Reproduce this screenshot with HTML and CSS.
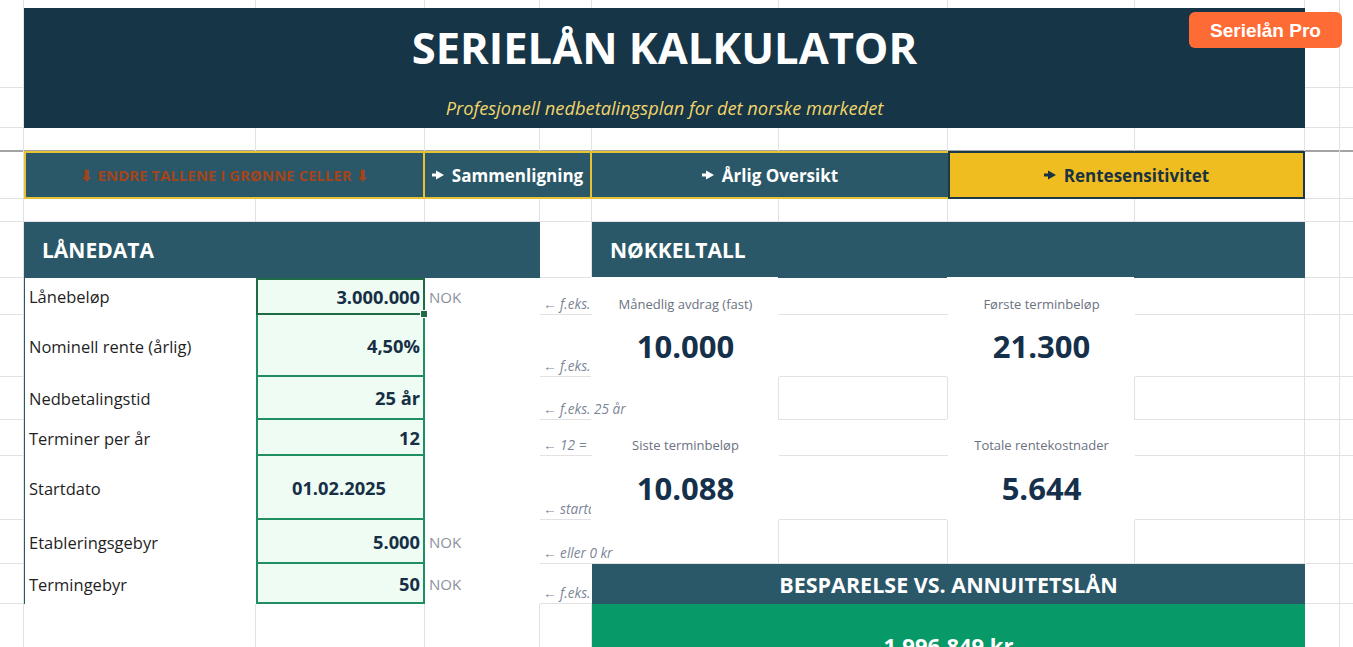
FILE: index.html
```html
<!DOCTYPE html>
<html lang="no">
<head>
<meta charset="utf-8">
<title>Serielån Kalkulator</title>
<link rel="stylesheet" href="styles.css">
</head>
<body>
<div class="sheet">
  <header class="banner">
    <h1 class="title">SERIELÅN KALKULATOR</h1>
    <p class="subtitle">Profesjonell nedbetalingsplan for det norske markedet</p>
  </header>
  <div class="badge">Serielån Pro</div>

  <nav class="tabs">
    <div class="tab tab-warn">⬇ ENDRE TALLENE I GRØNNE CELLER ⬇</div>
    <div class="tab"><svg class="ptr" viewBox="0 0 12 10" width="12" height="10"><path d="M0 3.6h4V0.6L12 5 4 9.4V6.4H0z"/></svg>Sammenligning</div>
    <div class="tab tab-pre"><svg class="ptr" viewBox="0 0 12 10" width="12" height="10"><path d="M0 3.6h4V0.6L12 5 4 9.4V6.4H0z"/></svg>Årlig Oversikt</div>
    <div class="tab tab-active"><svg class="ptr" viewBox="0 0 12 10" width="12" height="10"><path d="M0 3.6h4V0.6L12 5 4 9.4V6.4H0z"/></svg>Rentesensitivitet</div>
  </nav>

  <div class="sec-head sec-left">LÅNEDATA</div>
  <div class="sec-head sec-right">NØKKELTALL</div>

  <!-- labels -->
  <div class="lbl row1">Lånebeløp</div>
  <div class="lbl row2">Nominell rente (årlig)</div>
  <div class="lbl row3">Nedbetalingstid</div>
  <div class="lbl row4">Terminer per år</div>
  <div class="lbl row5">Startdato</div>
  <div class="lbl row6">Etableringsgebyr</div>
  <div class="lbl row7">Termingebyr</div>

  <!-- inputs -->
  <div class="inp inp-sel row1">3.000.000<span class="handle"></span></div>
  <div class="inp row2">4,50%</div>
  <div class="inp row3">25 år</div>
  <div class="inp row4">12</div>
  <div class="inp inp-center row5">01.02.2025</div>
  <div class="inp row6">5.000</div>
  <div class="inp row7">50</div>

  <!-- units -->
  <div class="unit row1">NOK</div>
  <div class="unit row2"></div>
  <div class="unit row3"></div>
  <div class="unit row4"></div>
  <div class="unit row5"></div>
  <div class="unit row6">NOK</div>
  <div class="unit row7">NOK</div>

  <!-- hints -->
  <div class="hint row1">← f.eks.</div>
  <div class="hint row2">← f.eks.</div>
  <div class="hint spill row3">← f.eks. 25 år</div>
  <div class="hint row4">← 12 =</div>
  <div class="hint row5">← startdato</div>
  <div class="hint spill row6">← eller 0 kr</div>
  <div class="hint row7">← f.eks.</div>

  <!-- key figures -->
  <div class="kl col-f row1">Månedlig avdrag (fast)</div>
  <div class="kv col-f row2">10.000</div>
  <div class="kl col-h row1">Første terminbeløp</div>
  <div class="kv col-h row2">21.300</div>
  <div class="kl col-f row4">Siste terminbeløp</div>
  <div class="kv col-f row5">10.088</div>
  <div class="kl col-h row4">Totale rentekostnader</div>
  <div class="kv col-h row5">5.644</div>

  <div class="save-head">BESPARELSE VS. ANNUITETSLÅN</div>
  <div class="save-val">1.996.849 kr</div>
</div>
</body>
</html>
```
FILE: styles.css
```css
* { box-sizing: border-box; }

html, body {
  margin: 0;
  padding: 0;
  background: #fff;
  overflow: hidden;
}

body {
  font-family: "Open Sans", "Noto Sans", sans-serif;
}

.sheet {
  --g: linear-gradient(#e2e2e2, #e2e2e2);
  --f: linear-gradient(#a3a3a3, #a3a3a3);
  position: relative;
  display: grid;
  grid-template-columns: 24px 232px 169px 115px 52px 187px 169px 187px 170px 35px 1fr;
  grid-template-rows: 8px 80px 40px 23px 48px 23px 56px 37px 62px 43px 36px 64px 44px 40px 1fr;
  width: 1353px;
  height: 647px;
  overflow: hidden;
  background-color: #fff;
  background-image:
    var(--g), var(--g), var(--g), var(--g), var(--g),
    var(--g), var(--g), var(--g), var(--g), var(--g),
    var(--g), var(--g), var(--g), var(--g), var(--g), var(--g),
    var(--g), var(--g), var(--g), var(--g), var(--g), var(--g),
    var(--f);
  background-position:
    23px 0, 255px 0, 424px 0, 539px 0, 591px 0,
    778px 0, 947px 0, 1134px 0, 1304px 0, 1339px 0,
    0 87px, 0 127px, 0 198px, 0 221px, 0 277px, 0 314px,
    0 376px, 0 419px, 0 455px, 0 519px, 0 563px, 0 603px,
    0 150px;
  background-size:
    1px 100%, 1px 100%, 1px 100%, 1px 100%, 1px 100%,
    1px 100%, 1px 100%, 1px 100%, 1px 100%, 1px 100%,
    100% 1px, 100% 1px, 100% 1px, 100% 1px, 100% 1px, 100% 1px,
    100% 1px, 100% 1px, 100% 1px, 100% 1px, 100% 1px, 100% 1px,
    100% 2px;
  background-repeat: no-repeat;
}

/* ---------- banner ---------- */
.banner {
  grid-column: 2 / 10;
  grid-row: 2 / 4;
  display: grid;
  grid-template-rows: 80px 40px;
  background: #163547;
  text-align: center;
}

.title {
  margin: 0;
  font-size: 43.5px;
  line-height: 80px;
  font-weight: 700;
  color: #fff;
}

.subtitle {
  margin: 0;
  font-size: 18.3px;
  line-height: 40px;
  font-style: italic;
  color: #f1d46a;
}

.badge {
  position: absolute;
  left: 1189px;
  top: 12px;
  width: 153px;
  height: 36px;
  border-radius: 6px;
  background: #ff6b35;
  color: #fff;
  font-family: "Liberation Sans", Arial, sans-serif;
  font-weight: 700;
  font-size: 19px;
  line-height: 38px;
  text-align: center;
}

/* ---------- tabs ---------- */
.tabs {
  grid-column: 2 / 10;
  grid-row: 5;
  display: grid;
  grid-template-columns: 401px 167px 356px 1fr;
}

.tab {
  display: flex;
  align-items: center;
  justify-content: center;
  gap: 8px;
  background: #2a5868;
  border: 2px solid #e7c234;
  border-left: 0;
  color: #fff;
  font-weight: 700;
  font-size: 17px;
  white-space: nowrap;
}

.tab:first-child { border-left: 2px solid #e7c234; }

.tab-warn {
  color: #a3441a;
  font-size: 15px;
}

.tab-pre { border-right: 0; }

.tab-active {
  background: #efbd1f;
  border: 2px solid #1c3a43;
  color: #1b3241;
}

.ptr { fill: currentColor; flex: none; }

/* ---------- section heads ---------- */
.sec-head {
  grid-row: 7;
  display: flex;
  align-items: center;
  padding-left: 18px;
  background: #2a5868;
  color: #fff;
  font-size: 21px;
  font-weight: 700;
}

.sec-left { grid-column: 2 / 5; }
.sec-right { grid-column: 6 / 10; }

/* ---------- rows ---------- */
.row1 { grid-row: 8; }
.row2 { grid-row: 9; }
.row3 { grid-row: 10; }
.row4 { grid-row: 11; }
.row5 { grid-row: 12; }
.row6 { grid-row: 13; }
.row7 { grid-row: 14; }

.lbl {
  grid-column: 2;
  display: flex;
  align-items: center;
  padding-left: 4px;
  background: #fff;
  border-left: 1px solid #2a5868;
  color: #1f1f1f;
  font-size: 16.5px;
}

.inp {
  grid-column: 3;
  display: flex;
  align-items: center;
  justify-content: flex-end;
  padding-right: 3px;
  background: #effcf4;
  border: 2px solid #1f8e60;
  border-top: 0;
  color: #162f44;
  font-size: 18.3px;
  font-weight: 700;
}

.inp-sel {
  position: relative;
  border: 2px solid #1e6b45;
}

.inp-center { justify-content: center; }

.handle {
  position: absolute;
  right: -5px;
  bottom: -5px;
  width: 8px;
  height: 8px;
  background: #1e6b45;
  border: 1px solid #fff;
}

.unit {
  grid-column: 4;
  display: flex;
  align-items: center;
  padding-left: 4px;
  background: #fff;
  color: #8a919c;
  font-size: 15px;
}

.hint {
  grid-column: 5;
  display: flex;
  align-items: flex-end;
  padding: 0 0 3px 3px;
  background: linear-gradient(#e2e2e2, #e2e2e2) 0 100% / 100% 1px no-repeat, #fff;
  color: #7b8597;
  font-size: 13.6px;
  font-style: italic;
  line-height: 16px;
  white-space: nowrap;
  overflow: hidden;
}

.spill { overflow: visible; }

/* ---------- key figures ---------- */
.col-f { grid-column: 6; }
.col-h { grid-column: 8; }

.kl {
  display: flex;
  align-items: flex-end;
  justify-content: center;
  padding-bottom: 2px;
  background: #fff;
  box-shadow: -1px -1px 0 #fff;
  color: #6b7280;
  font-size: 13px;
}

.kv {
  display: flex;
  align-items: center;
  justify-content: center;
  background: #fff;
  box-shadow: -1px 0 0 #fff;
  color: #15304a;
  font-size: 31px;
  font-weight: 700;
}

.save-head {
  grid-column: 6 / 10;
  grid-row: 14;
  display: flex;
  align-items: center;
  justify-content: center;
  background: #2a5868;
  color: #fff;
  font-size: 21.5px;
  font-weight: 700;
}

.save-val {
  grid-column: 6 / 10;
  grid-row: 15;
  padding-top: 26px;
  background: #079a68;
  color: #fff;
  font-size: 22px;
  font-weight: 700;
  line-height: 30px;
  text-align: center;
}
```
